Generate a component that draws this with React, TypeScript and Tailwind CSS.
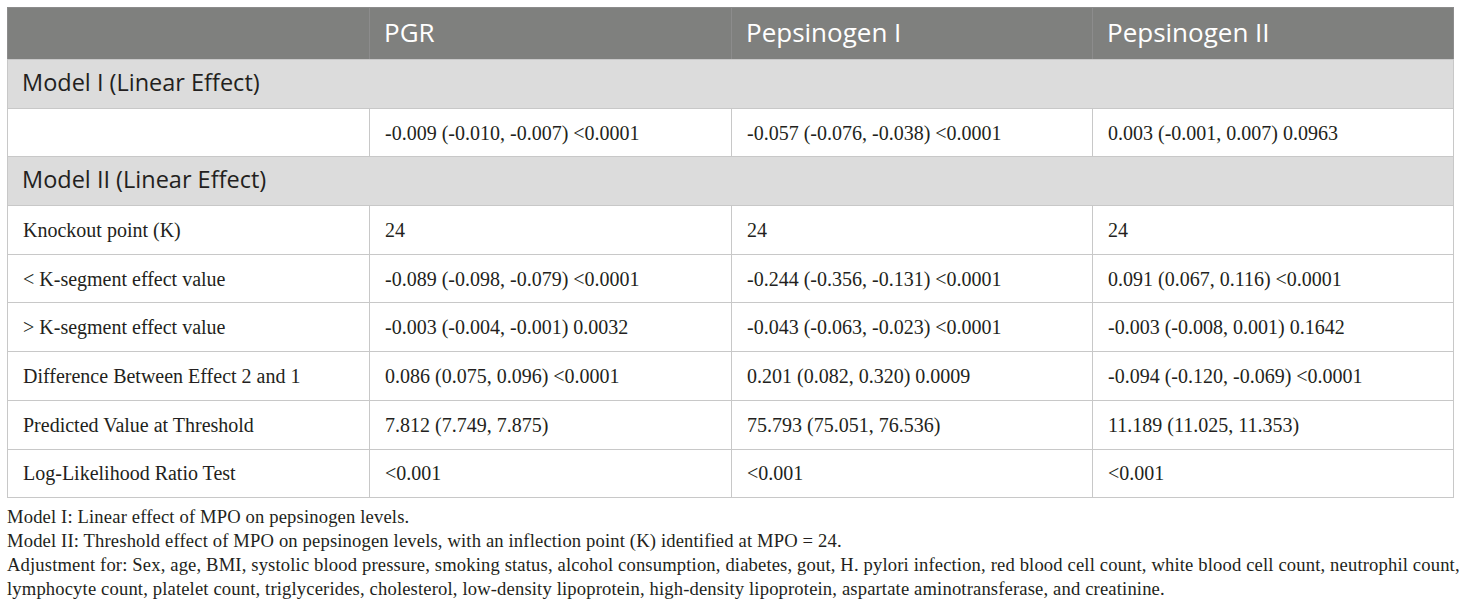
import React from "react";

const sans = { fontFamily: '"Open Sans", "Noto Sans", sans-serif' };

type Row = { kind: "section"; label: string } | { kind: "data"; cells: string[] };

const rows: Row[] = [
  { kind: "section", label: "Model I (Linear Effect)" },
  { kind: "data", cells: ["", "-0.009 (-0.010, -0.007) <0.0001", "-0.057 (-0.076, -0.038) <0.0001", "0.003 (-0.001, 0.007) 0.0963"] },
  { kind: "section", label: "Model II (Linear Effect)" },
  { kind: "data", cells: ["Knockout point (K)", "24", "24", "24"] },
  { kind: "data", cells: ["< K-segment effect value", "-0.089 (-0.098, -0.079) <0.0001", "-0.244 (-0.356, -0.131) <0.0001", "0.091 (0.067, 0.116) <0.0001"] },
  { kind: "data", cells: ["> K-segment effect value", "-0.003 (-0.004, -0.001) 0.0032", "-0.043 (-0.063, -0.023) <0.0001", "-0.003 (-0.008, 0.001) 0.1642"] },
  { kind: "data", cells: ["Difference Between Effect 2 and 1", "0.086 (0.075, 0.096) <0.0001", "0.201 (0.082, 0.320) 0.0009", "-0.094 (-0.120, -0.069) <0.0001"] },
  { kind: "data", cells: ["Predicted Value at Threshold", "7.812 (7.749, 7.875)", "75.793 (75.051, 76.536)", "11.189 (11.025, 11.353)"] },
  { kind: "data", cells: ["Log-Likelihood Ratio Test", "<0.001", "<0.001", "<0.001"] },
];

export default function App() {
  return (
    <div className="w-[1460px] h-[608px] bg-white pt-[7px] px-[7px] text-[#231f20]" style={{ fontFamily: '"Liberation Serif", serif' }}>
      <table className="w-[1446px] table-fixed border-collapse">
        <colgroup>
          <col className="w-[362px]" />
          <col className="w-[362px]" />
          <col className="w-[361px]" />
          <col className="w-[361px]" />
        </colgroup>
        <thead>
          <tr className="h-[52px] bg-[#7f807e] text-white" style={sans}>
            <th className="border border-[#8c8c8c] border-b-[#c8c8c8]" />
            {["PGR", "Pepsinogen I", "Pepsinogen II"].map((h) => (
              <th key={h} className="border border-[#8c8c8c] border-b-[#c8c8c8] pl-[14px] pb-[3px] text-left font-normal text-[26px] leading-none">
                {h}
              </th>
            ))}
          </tr>
        </thead>
        <tbody>
          {rows.map((r, i) =>
            r.kind === "section" ? (
              <tr key={i} className="h-[48.7px] bg-[#dcdcdc]">
                <td colSpan={4} className="border border-[#c8c8c8] pl-[14px] pb-[2px] text-[23.5px] leading-none" style={sans}>
                  {r.label}
                </td>
              </tr>
            ) : (
              <tr key={i} className="h-[48.7px]">
                {r.cells.map((c, j) => (
                  <td key={j} className="border border-[#c8c8c8] pl-[15px] text-[20px] leading-none whitespace-nowrap">
                    {c}
                  </td>
                ))}
              </tr>
            )
          )}
        </tbody>
      </table>
      <div className="mt-[7px] text-[18.6px] leading-[24px] tracking-[0.15px]">
        <p>Model I: Linear effect of MPO on pepsinogen levels.</p>
        <p>Model II: Threshold effect of MPO on pepsinogen levels, with an inflection point (K) identified at MPO = 24.</p>
        <p>
          <span className="whitespace-nowrap">
            Adjustment for: Sex, age, BMI, systolic blood pressure, smoking status, alcohol consumption, diabetes, gout, H. pylori infection, red blood cell count, white blood cell count, neutrophil count,
          </span>
          <br />
          lymphocyte count, platelet count, triglycerides, cholesterol, low-density lipoprotein, high-density lipoprotein, aspartate aminotransferase, and creatinine.
        </p>
      </div>
    </div>
  );
}
